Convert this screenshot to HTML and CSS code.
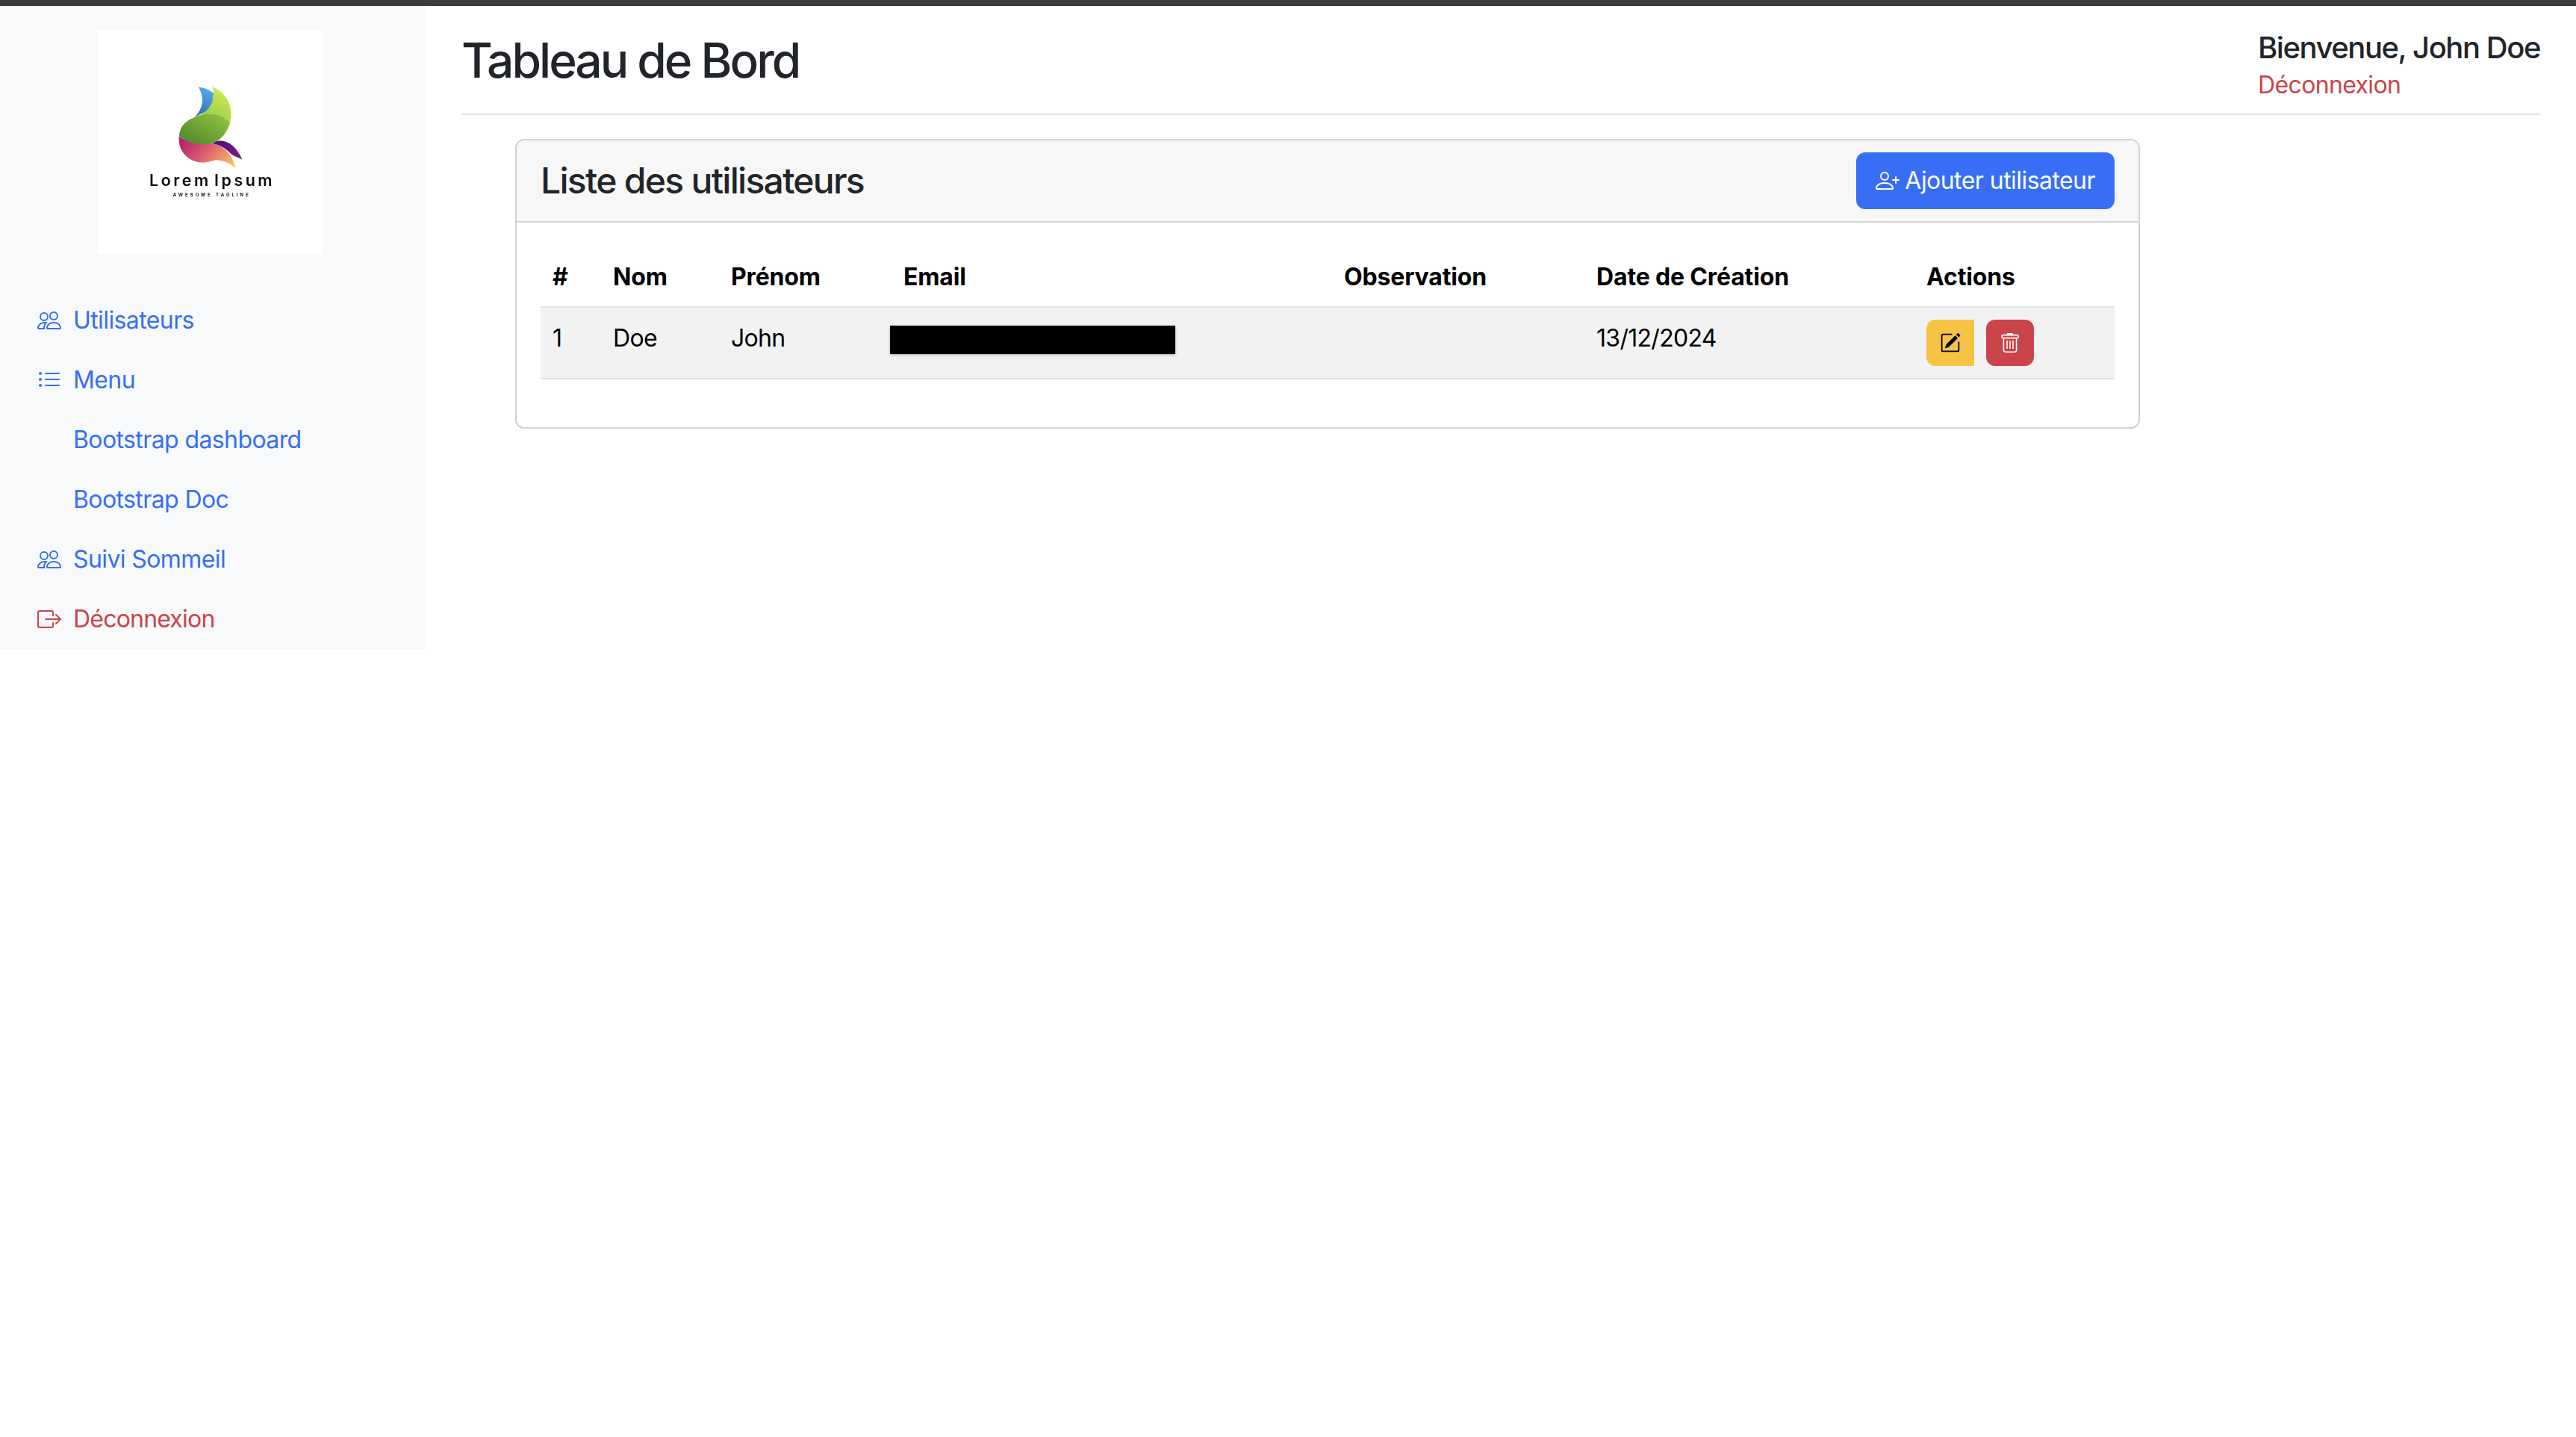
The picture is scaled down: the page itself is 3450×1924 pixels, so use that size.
FILE: index.html
```html
<!DOCTYPE HTML>
<html>
<head>
<meta http-equiv="Content-Type" content="text/html; charset=utf-8">
<title>Tableau de Bord</title>
<link rel="stylesheet" href="styles.css">
</head>

<body>
<div class="top-bar"></div>
<div class="wrap">
	<!-- menu de gauche -->
	<div class="sidebar">
		<div class="logo">
			<svg class="logo-svg" viewBox="6 -150 900 900">
				<defs>
					<linearGradient id="lg_blue" x1="0.6" y1="0" x2="0.3" y2="1"><stop offset="0" stop-color="#55ade6"/><stop offset="1" stop-color="#2f6fb5"/></linearGradient>
					<linearGradient id="lg_leaf" x1="0.8" y1="0" x2="0.2" y2="1"><stop offset="0" stop-color="#cdee58"/><stop offset="0.6" stop-color="#8fc443"/><stop offset="1" stop-color="#4f8a2a"/></linearGradient>
					<linearGradient id="lg_body" x1="1" y1="0" x2="0" y2="1"><stop offset="0" stop-color="#96c544"/><stop offset="1" stop-color="#4a8326"/></linearGradient>
					<linearGradient id="lg_pink" x1="0" y1="0.3" x2="1" y2="0.8"><stop offset="0" stop-color="#b4256a"/><stop offset="0.45" stop-color="#dd5c72"/><stop offset="1" stop-color="#f7c25e"/></linearGradient>
					<linearGradient id="lg_purple" x1="0" y1="0" x2="1" y2="1"><stop offset="0" stop-color="#3d1470"/><stop offset="1" stop-color="#8a1a8c"/></linearGradient>
				</defs>
				<path fill="url(#lg_blue)" d="M407 79C435 84 452 92 468 104L462 165L393 200C428 165 432 120 407 79Z"/>
				<path fill="url(#lg_purple)" d="M460 307C480 290 520 290 550 320C565 335 576 352 583 371C562 360 546 357 535 345C515 325 490 310 460 307Z"/>
				<path fill="url(#lg_pink)" d="M329 277C360 300 410 315 460 307C510 312 546 355 556 406C530 380 490 365 455 378C400 397 322 360 329 277Z"/>
				<path fill="url(#lg_leaf)" d="M463 79C515 100 540 145 538 190C536 250 505 295 455 308C405 316 360 300 331 277C330 240 355 215 395 200C430 190 455 165 466 130C470 110 468 95 463 79Z"/>
				<path fill="url(#lg_body)" d="M534 225C515 270 490 298 455 308C405 316 360 300 331 277C330 240 355 215 395 200C430 188 490 175 534 225Z"/>
				<text class="logo-name" x="210" y="476" textLength="493" lengthAdjust="spacing">Lorem Ipsum</text>
				<text class="logo-tag" x="305" y="518" textLength="303" lengthAdjust="spacing">AWESOME TAGLINE</text>
			</svg>
		</div>
		<ul class="nav">
			<li><a href="javascript:;" class="nav-link">
				<svg class="nav-icon" viewBox="0 0 16 16" fill="currentColor"><path d="M15 14s1 0 1-1-1-4-5-4-5 3-5 4 1 1 1 1zm-7.978-1L7 12.996c.001-.264.167-1.03.76-1.72C8.312 10.629 9.282 10 11 10c1.717 0 2.687.63 3.24 1.276.593.69.758 1.457.76 1.72l-.008.002-.014.002H7.022ZM11 7a2 2 0 1 0 0-4 2 2 0 0 0 0 4m3-2a3 3 0 1 1-6 0 3 3 0 0 1 6 0M6.936 9.28a6 6 0 0 0-1.23-.247A7 7 0 0 0 5 9c-4 0-5 3-5 4q0 1 1 1h4.216A2.24 2.24 0 0 1 5 13c0-1.01.377-2.042 1.09-2.904.243-.294.526-.569.846-.816M4.92 10A5.5 5.5 0 0 0 4 13H1c0-.26.164-1.03.76-1.724.545-.636 1.492-1.256 3.16-1.275ZM1.5 5.5a3 3 0 1 1 6 0 3 3 0 0 1-6 0m3-2a2 2 0 1 0 0 4 2 2 0 0 0 0-4"/></svg>
				Utilisateurs</a></li>
			<li><a href="javascript:;" class="nav-link">
				<svg class="nav-icon" viewBox="0 0 16 16" fill="currentColor"><path d="M5 11.5a.5.5 0 0 1 .5-.5h9a.5.5 0 0 1 0 1h-9a.5.5 0 0 1-.5-.5m0-4a.5.5 0 0 1 .5-.5h9a.5.5 0 0 1 0 1h-9a.5.5 0 0 1-.5-.5m0-4a.5.5 0 0 1 .5-.5h9a.5.5 0 0 1 0 1h-9a.5.5 0 0 1-.5-.5m-3 1a1 1 0 1 0 0-2 1 1 0 0 0 0 2m0 4a1 1 0 1 0 0-2 1 1 0 0 0 0 2m0 4a1 1 0 1 0 0-2 1 1 0 0 0 0 2"/></svg>
				Menu</a></li>
			<li><a href="javascript:;" class="nav-link nav-sub">Bootstrap dashboard</a></li>
			<li><a href="javascript:;" class="nav-link nav-sub">Bootstrap Doc</a></li>
			<li><a href="javascript:;" class="nav-link">
				<svg class="nav-icon" viewBox="0 0 16 16" fill="currentColor"><path d="M15 14s1 0 1-1-1-4-5-4-5 3-5 4 1 1 1 1zm-7.978-1L7 12.996c.001-.264.167-1.03.76-1.72C8.312 10.629 9.282 10 11 10c1.717 0 2.687.63 3.24 1.276.593.69.758 1.457.76 1.72l-.008.002-.014.002H7.022ZM11 7a2 2 0 1 0 0-4 2 2 0 0 0 0 4m3-2a3 3 0 1 1-6 0 3 3 0 0 1 6 0M6.936 9.28a6 6 0 0 0-1.23-.247A7 7 0 0 0 5 9c-4 0-5 3-5 4q0 1 1 1h4.216A2.24 2.24 0 0 1 5 13c0-1.01.377-2.042 1.09-2.904.243-.294.526-.569.846-.816M4.92 10A5.5 5.5 0 0 0 4 13H1c0-.26.164-1.03.76-1.724.545-.636 1.492-1.256 3.16-1.275ZM1.5 5.5a3 3 0 1 1 6 0 3 3 0 0 1-6 0m3-2a2 2 0 1 0 0 4 2 2 0 0 0 0-4"/></svg>
				Suivi Sommeil</a></li>
			<li><a href="javascript:;" class="nav-link nav-red">
				<svg class="nav-icon" viewBox="0 0 16 16" fill="currentColor"><path d="M10 12.5a.5.5 0 0 1-.5.5h-8a.5.5 0 0 1-.5-.5v-9a.5.5 0 0 1 .5-.5h8a.5.5 0 0 1 .5.5v2a.5.5 0 0 0 1 0v-2A1.5 1.5 0 0 0 9.5 2h-8A1.5 1.5 0 0 0 0 3.5v9A1.5 1.5 0 0 0 1.5 14h8a1.5 1.5 0 0 0 1.5-1.5v-2a.5.5 0 0 0-1 0z"/><path d="M15.854 8.354a.5.5 0 0 0 0-.708l-3-3a.5.5 0 0 0-.708.708L14.293 7.5H5.5a.5.5 0 0 0 0 1h8.793l-2.147 2.146a.5.5 0 0 0 .708.708z"/></svg>
				Déconnexion</a></li>
		</ul>
	</div>

	<div class="main">
		<!-- titre et utilisateur -->
		<div class="page-hd">
			<h2 class="page-title">Tableau de Bord</h2>
			<div class="user-box">
				<h5 class="user-name">Bienvenue, John Doe</h5>
				<a href="javascript:;" class="user-out">Déconnexion</a>
			</div>
		</div>

		<!-- liste -->
		<div class="card">
			<div class="card-hd">
				<h4 class="card-title">Liste des utilisateurs</h4>
				<a href="javascript:;" class="btn-add">
					<svg class="btn-add-icon" viewBox="0 0 16 16" fill="currentColor"><path d="M6 8a3 3 0 1 0 0-6 3 3 0 0 0 0 6m2-3a2 2 0 1 1-4 0 2 2 0 0 1 4 0m4 8c0 1-1 1-1 1H1s-1 0-1-1 1-4 6-4 6 3 6 4m-1-.004c-.001-.246-.154-.986-.832-1.664C9.516 10.68 8.289 10 6 10s-3.516.68-4.168 1.332c-.678.678-.83 1.418-.832 1.664z"/><path d="M13.5 5a.5.5 0 0 1 .5.5V7h1.5a.5.5 0 0 1 0 1H14v1.5a.5.5 0 0 1-1 0V8h-1.5a.5.5 0 0 1 0-1H13V5.5a.5.5 0 0 1 .5-.5"/></svg>
					Ajouter utilisateur</a>
			</div>
			<div class="card-bd">
				<table class="user-table">
					<colgroup>
						<col class="col-id"><col class="col-nom"><col class="col-prenom"><col class="col-email"><col class="col-obs"><col class="col-date"><col class="col-act">
					</colgroup>
					<thead>
						<tr><th>#</th><th>Nom</th><th>Prénom</th><th>Email</th><th>Observation</th><th>Date de Création</th><th>Actions</th></tr>
					</thead>
					<tbody>
						<tr>
							<td>1</td>
							<td>Doe</td>
							<td>John</td>
							<td><span class="redact"></span></td>
							<td></td>
							<td>13/12/2024</td>
							<td>
								<div class="act-box">
									<a href="javascript:;" class="btn-edit">
										<svg class="act-icon" viewBox="0 0 16 16" fill="currentColor"><path d="M15.502 1.94a.5.5 0 0 1 0 .706L14.459 3.69l-2-2L13.502.646a.5.5 0 0 1 .707 0l1.293 1.293zm-1.75 2.456-2-2L4.939 9.21a.5.5 0 0 0-.121.196l-.805 2.414a.25.25 0 0 0 .316.316l2.414-.805a.5.5 0 0 0 .196-.12l6.813-6.814z"/><path d="M1 13.5A1.5 1.5 0 0 0 2.5 15h11a1.5 1.5 0 0 0 1.5-1.5v-6a.5.5 0 0 0-1 0v6a.5.5 0 0 1-.5.5h-11a.5.5 0 0 1-.5-.5v-11a.5.5 0 0 1 .5-.5H9a.5.5 0 0 0 0-1H2.5A1.5 1.5 0 0 0 1 2.5z"/></svg>
									</a>
									<a href="javascript:;" class="btn-del">
										<svg class="act-icon" viewBox="0 0 24 28" fill="none" stroke="currentColor" stroke-width="1.6"><path d="M9 2.2h6" stroke-width="2.2" stroke-linecap="round"/><rect x="1" y="3.6" width="22" height="4" rx="1.4"/><path d="M3.4 7.6v15.6a3 3 0 0 0 3 3h11.2a3 3 0 0 0 3-3V7.6"/><path d="M8 11v11M12 11v11M16 11v11"/></svg>
									</a>
								</div>
							</td>
						</tr>
					</tbody>
				</table>
			</div>
		</div>
	</div>
</div>
</body>
</html>
```

FILE: styles.css
```css
*{box-sizing:border-box;}
body{margin:0;background:#FFF;color:#212529;font-family:Inter,"Liberation Sans",sans-serif;font-size:32px;line-height:48px;letter-spacing:-0.6px;}
a{text-decoration:none;color:#376EF5;}
h2,h4,h5{margin:0;font-weight:500;line-height:1.2;}
.top-bar{height:8px;background:#3C3C3C;}
.wrap{display:flex;align-items:flex-start;}

/* menu */
.sidebar{flex:0 0 570px;height:861px;padding:32px 0 0 0;background:#F8F9FA;}
.logo{width:300px;height:300px;margin-left:132px;background:#FFF;}
.logo-svg{display:block;width:300px;height:300px;filter:blur(0.3px);}
.logo-name{font-family:Inter,sans-serif;font-size:64px;font-weight:600;word-spacing:-14px;fill:#0A0A0A;}
.logo-tag{font-family:Inter,sans-serif;font-size:18px;font-weight:700;fill:#111;}
.nav{margin:49px 0 0 0;padding:0;list-style:none;}
.nav-link{display:flex;align-items:center;gap:16px;height:80px;padding-left:50px;}
.nav-sub{padding-left:98px;}
.nav-red{color:#CB444A;letter-spacing:-0.8px;}
.nav-icon{width:32px;height:32px;flex:none;}

/* contenu */
.main{flex:1;min-width:0;padding:0 48px;}
.page-hd{display:flex;justify-content:space-between;align-items:flex-start;height:146px;padding-top:32px;border-bottom:2px solid #DEE2E6;}
.page-title{font-size:64px;margin-top:3px;letter-spacing:-3px;}
.user-name{font-size:40px;letter-spacing:-1.45px;}
.user-out{display:block;margin-top:2px;color:#CB444A;letter-spacing:-0.65px;}

.card{margin:32px 0 0 72px;width:2176px;border:2px solid #D2D2D2;border-radius:12px;overflow:hidden;}
.card-hd{display:flex;justify-content:space-between;align-items:center;height:110px;padding:0 32px;background:#F7F7F7;border-bottom:2px solid #D2D2D2;}
.card-title{font-size:48px;letter-spacing:-1.7px;}
.btn-add{display:flex;align-items:center;gap:7px;height:76px;padding:0 26px;border-radius:12px;background:#376EF5;color:#FFF;letter-spacing:-0.55px;}
.btn-add-icon{width:32px;height:32px;flex:none;}
.card-bd{padding:32px 32px 64px;}

.user-table{width:2108px;table-layout:fixed;border-collapse:collapse;color:#000;line-height:50px;}
.col-id{width:81px;}
.col-nom{width:158px;}
.col-prenom{width:231px;}
.col-email{width:590px;}
.col-obs{width:338px;}
.col-date{width:442px;}
.col-act{width:268px;}
.user-table th{height:80px;padding:16px 16px 14px;text-align:left;font-weight:700;letter-spacing:-0.15px;border-bottom:2px solid #DEE2E6;}
.user-table td{height:96px;padding:16px;vertical-align:top;letter-spacing:-0.7px;background:#F2F2F2;border-bottom:2px solid #DEE2E6;}
.redact{display:block;width:382px;height:38px;margin:8px 0 0 -18px;background:#000;box-shadow:0 1px 3px rgba(0,0,0,0.35);}

.act-box{display:flex;gap:16px;}
.btn-edit,.btn-del{display:flex;align-items:center;justify-content:center;width:64px;height:62px;}
.btn-edit{background:#F6C344;color:#000;border-radius:12px 0 0 12px;}
.btn-del{background:#CB444A;color:#FFF;border-radius:12px;}
.act-icon{width:28px;height:28px;}
```
